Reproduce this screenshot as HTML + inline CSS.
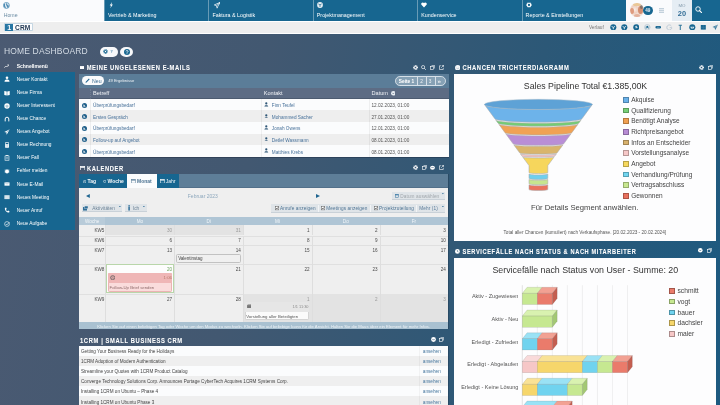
<!DOCTYPE html>
<html><head><meta charset="utf-8">
<style>
*{margin:0;padding:0;box-sizing:border-box}
html,body{width:720px;height:405px;overflow:hidden}
body{will-change:transform}
body{position:relative;font-family:"Liberation Sans",sans-serif;background:linear-gradient(100deg,#4b5a72 0%,#425871 35%,#2c5877 70%,#1d5a80 100%);color:#333}
.a{position:absolute}
.nw{white-space:nowrap}
/* top nav */
#nav{left:0;top:0;width:720px;height:21px;background:#fff}
.tab{top:0;height:20.5px;background:#176690;color:#fff;font-size:5.35px}
.tab .t{position:absolute;left:4px;top:12.4px;white-space:nowrap}
.tab .ic{position:absolute;left:5px;top:2.5px;width:6px;height:6px}
.sep{position:absolute;top:0;width:1px;height:20.5px;background:rgba(255,255,255,.35)}
#bar2{left:0;top:21px;width:720px;height:12.5px;background:#eeeeee;border-top:1px solid #fff;border-bottom:1px solid #fff}
/* sidebar */
#side{left:0;top:72px;width:75px;height:158px;background:#176690}
.si{position:absolute;left:16.8px;font-size:4.8px;color:#fff;white-space:nowrap}
.sic{position:absolute;left:4px;width:5px;height:5px}
/* panels */
.ptitle{font-size:5.5px;font-weight:bold;color:#fff;letter-spacing:.7px;white-space:nowrap;-webkit-text-stroke:.05px #fff;transform:translateY(.4px) scaleY(1.25);transform-origin:0 62%}
</style></head><body>

<!-- NAV -->
<div id="nav" class="a">
  <div class="a" style="left:0;top:0;width:104px;height:20.5px;background:#fafbfd">
    <svg class="a" style="left:3.2px;top:2px" width="6.8" height="6.9" viewBox="0 0 10 10"><circle cx="5" cy="5" r="4.4" fill="#e9f1f6" stroke="#4a89b3" stroke-width="1.1"/><path d="M2.2 2.6 C3.2 3 3.4 4.2 3 5 C2.6 5.8 3.6 6.4 4 7.2 L4.2 9 C3 8.6 1.6 7.6 1.1 5.6 C0.9 4.2 1.4 3.2 2.2 2.6 Z M5.6 1.4 C6.4 2.6 6 3.6 6.8 4.4 C7.6 5.2 8.4 4.8 8.8 5.6 C8.6 7.4 7.6 8.4 6.4 8.8 C6.8 7.6 6.2 6.8 5.6 6.4 C5 6 5.2 4.8 4.6 4 C4.2 3 4.8 2 5.6 1.4 Z" fill="#4a89b3"/></svg>
    <div class="a nw" style="left:3.7px;top:12.2px;font-size:5.2px;color:#6a8ba3">Home</div>
  </div>
  <div class="a tab" style="left:104px;width:104.4px"><div class="sep" style="left:0"></div><svg class="ic" style="left:4.6px;top:2px;width:4.5px;height:6.3px" viewBox="0 0 6 9"><path d="M4.2 0 L0.8 5 L2.8 5 L1.6 9 L5.3 3.6 L3.2 3.6 Z" fill="#fff"/></svg><span class="t">Vertrieb &amp; Marketing</span></div>
  <div class="a tab" style="left:208.4px;width:104.4px"><div class="sep" style="left:0"></div><svg class="ic" style="left:5.5px;top:2px;width:6.5px;height:6.5px" viewBox="0 0 10 10"><path d="M9.5 0.5 L0.5 4.5 L3.8 5.8 L4.8 9.5 L6 6.5 Z M3.8 5.8 L9.5 0.5" fill="none" stroke="#fff" stroke-width="1.1" stroke-linejoin="round"/></svg><span class="t">Faktura &amp; Logistik</span></div>
  <div class="a tab" style="left:312.8px;width:104.4px"><div class="sep" style="left:0"></div><svg class="ic" style="left:4.5px;top:2.2px;width:6px;height:6px" viewBox="0 0 10 10"><circle cx="5" cy="5" r="4.8" fill="#e8eef3"/><path d="M2.2 3.2 L5 4.8 L7.8 3.2 M5 4.8 L5 8.3" stroke="#176690" stroke-width="1.2" fill="none"/></svg><span class="t">Projektmanagement</span></div>
  <div class="a tab" style="left:417.2px;width:104.4px"><div class="sep" style="left:0"></div><svg class="ic" style="left:4.3px;top:2.4px;width:6px;height:5.6px" viewBox="0 0 10 9"><path d="M5 9 L0.8 4.6 C-0.3 3 0.6 0.5 2.8 0.5 C3.8 0.5 4.5 1 5 1.7 C5.5 1 6.2 0.5 7.2 0.5 C9.4 0.5 10.3 3 9.2 4.6 Z" fill="#fff"/></svg><span class="t">Kundenservice</span></div>
  <div class="a tab" style="left:521.6px;width:104.4px"><div class="sep" style="left:0"></div><svg class="ic" style="left:4.6px;top:2.3px;width:6px;height:6px" viewBox="0 0 10 10"><path d="M5 0.3 L6 1.6 L7.6 1 L7.9 2.6 L9.5 3.2 L8.8 4.8 L9.6 6.3 L8 6.9 L7.6 8.6 L6 8.2 L5 9.6 L4 8.2 L2.4 8.6 L2 6.9 L0.4 6.3 L1.2 4.8 L0.5 3.2 L2.1 2.6 L2.4 1 L4 1.6 Z" fill="#fff"/><circle cx="5" cy="5" r="1.9" fill="#176690"/></svg><span class="t">Reporte &amp; Einstellungen</span></div>
  <div class="a" style="left:626px;top:0;width:46px;height:20.5px;background:#fafbfd"></div>
  <!-- avatar -->
  <div class="a" style="left:629.8px;top:2.6px;width:14px;height:14.7px;border-radius:50%;overflow:hidden;background:#f1ddd2">
    <div class="a" style="left:1px;top:2px;width:7px;height:9px;border-radius:50%;background:radial-gradient(circle,#f7efe9 0%,#efcfc0 60%,rgba(239,207,192,0) 100%)"></div>
    <div class="a" style="left:0;top:5px;width:4px;height:6px;border-radius:50%;background:#d98c6c;opacity:.8"></div>
    <div class="a" style="left:8px;top:3px;width:5px;height:8px;border-radius:50%;background:#c9734f;opacity:.75"></div>
    <div class="a" style="left:3px;top:0;width:8px;height:3.5px;border-radius:50%;background:#e9c48d;opacity:.85"></div>
    <div class="a" style="left:10px;top:2px;width:3px;height:4px;border-radius:50%;background:#555c5e;opacity:.6"></div>
    <div class="a" style="left:4px;top:11px;width:6px;height:4px;border-radius:50%;background:#e0a68e;opacity:.8"></div>
  </div>
  <div class="a" style="left:642.8px;top:5.6px;width:10px;height:9.5px;border-radius:50%;background:#176690;color:#e8eef3;font-size:4.6px;font-weight:bold;text-align:center;line-height:9.5px">49</div>
  <div class="a" style="left:659px;top:8px;width:5.4px;height:4.8px;background:repeating-linear-gradient(#c3d1dc 0 1.1px,#e4eaf0 1.1px 1.85px)"></div>
  <div class="a" style="left:672.2px;top:0;width:19.5px;height:20.5px;background:#e5edf4">
    <div class="a nw" style="left:0;width:19.5px;text-align:center;top:3px;font-size:4.4px;color:#8299ab">MO</div>
    <div class="a nw" style="left:0;width:19.5px;text-align:center;top:9px;font-size:7.4px;font-weight:bold;color:#336e97">20</div>
  </div>
  <div class="a" style="left:691.7px;top:0;width:28.3px;height:20.5px;background:#176690">
    <svg class="a" style="left:3.3px;top:5.7px" width="7.5" height="7.5" viewBox="0 0 10 10"><circle cx="4" cy="4" r="3" fill="none" stroke="#fff" stroke-width="1.2"/><path d="M6.1 6.1 L9.2 9.2" stroke="#fff" stroke-width="1.6" stroke-linecap="round"/></svg>
  </div>
</div>

<!-- BAR 2 -->
<div id="bar2" class="a">
  <div class="a" style="left:4.4px;top:1px;width:28.2px;height:8.2px;background:#fdfdfe;border:0.6px solid #c5d6e2;border-radius:.8px">
    <div class="a" style="left:0;top:0;width:8px;height:7px;background:#2776a3"></div>
    <div class="a nw" style="left:1.9px;top:-0.4px;font-size:7.2px;font-weight:bold;color:#f4f8fb;line-height:8px">1</div>
    <div class="a nw" style="left:9.6px;top:-0.2px;font-size:6.6px;font-weight:bold;color:#233a55;line-height:8px;letter-spacing:.15px">CRM</div>
  </div>
  <div class="a nw" style="left:588.9px;top:3.2px;font-size:4.8px;color:#7a7a7a">Verlauf</div>
  <svg class="a" style="left:610.0px;top:1.6px" width="6.6" height="6.6" viewBox="0 0 10 10"><circle cx="5" cy="5" r="4.6" fill="#176690"/><path d="M2.3 3.5 L5 5.2 L7.7 3.5 M5 5.2 L5 8" stroke="#fff" stroke-width="1.2" fill="none"/></svg>
  <svg class="a" style="left:621.2px;top:1.6px" width="6.6" height="6.6" viewBox="0 0 10 10"><circle cx="5" cy="5" r="4.6" fill="#176690"/><path d="M2.3 3.5 L5 5.2 L7.7 3.5 M5 5.2 L5 8" stroke="#fff" stroke-width="1.2" fill="none"/></svg>
  <svg class="a" style="left:632.5px;top:1.6px" width="6.6" height="6.6" viewBox="0 0 10 10"><circle cx="5" cy="5" r="4.6" fill="#176690"/><path d="M3 4.2 L5.4 4.2 L5.4 2.8 M4.6 6.6 L4.6 5.2 L7 5.2" stroke="#fff" stroke-width="1.1" fill="none"/></svg>
  <svg class="a" style="left:644.0px;top:1.6px" width="6.6" height="6.6" viewBox="0 0 10 10"><circle cx="5" cy="5" r="4.2" fill="none" stroke="#9ab4c8" stroke-width="0.8"/><circle cx="5" cy="4" r="1.3" fill="#176690"/><path d="M2.5 6.8 L5 5.5 L7.5 6.8 M2 4.8 L8 4.8" stroke="#176690" stroke-width="0.9" fill="none"/></svg>
  <svg class="a" style="left:654.8px;top:1.6px" width="6.6" height="6.6" viewBox="0 0 10 10"><rect x="0.6" y="3" width="8.8" height="4" rx="2" fill="#176690"/><rect x="3" y="4.2" width="4" height="1.6" fill="#5a8fb0"/></svg>
  <svg class="a" style="left:666.1px;top:1.6px" width="6.6" height="6.6" viewBox="0 0 10 10"><path d="M8.2 3.2 A3.8 3.8 0 1 0 8.8 5.5 L5.5 5.5" fill="none" stroke="#a8bccb" stroke-width="1"/></svg>
  <svg class="a" style="left:677.3px;top:1.6px" width="6.6" height="6.6" viewBox="0 0 10 10"><path d="M2.5 1.2 L7.5 1.2 L7.5 2.5 L5.8 2.5 L5.8 9 L4.2 9 L4.2 2.5 L2.5 2.5 Z" fill="#176690" opacity=".85"/></svg>
  <svg class="a" style="left:689.0px;top:1.6px" width="6.6" height="6.6" viewBox="0 0 10 10"><circle cx="5" cy="5" r="4.6" fill="#176690"/><path d="M2 4 L8 4 L6.8 7 L3.2 7 Z" fill="#fff" opacity=".9"/><path d="M4 5 L6 5" stroke="#176690" stroke-width=".8"/></svg>
  <svg class="a" style="left:700.2px;top:1.6px" width="6.6" height="6.6" viewBox="0 0 10 10"><rect x="1.2" y="1.5" width="7.6" height="7" fill="#176690"/><path d="M1.2 5 L8.8 5 M5 1.5 L5 8.5" stroke="#4d86aa" stroke-width=".6"/></svg>
  <svg class="a" style="left:711.5px;top:1.6px" width="6.6" height="6.6" viewBox="0 0 10 10"><path d="M9.2 0.8 L0.8 4.6 L3.8 5.8 L5 9.2 Z" fill="#176690" opacity=".85"/><path d="M3.8 5.8 L9.2 0.8" stroke="#eee" stroke-width=".7"/></svg>
</div>

<!-- TITLE -->
<div class="a nw" style="left:4px;top:45.6px;font-size:8.5px;color:#d3dbe4;letter-spacing:.15px">HOME DASHBOARD</div>
<div class="a" style="left:99.6px;top:46.5px;width:18.1px;height:10.5px;border-radius:5.25px;background:#f7f8fa">
  <svg class="a" style="left:3.2px;top:2.8px" width="5" height="5" viewBox="0 0 10 10"><circle cx="5" cy="5" r="3.6" fill="none" stroke="#176690" stroke-width="2.4" stroke-dasharray="1.4 .9"/><circle cx="5" cy="5" r="3" fill="#176690"/><circle cx="5" cy="5" r="1.3" fill="#fff"/></svg>
  <svg class="a" style="left:10.5px;top:3.8px" width="3.4" height="3.4" viewBox="0 0 10 10"><path d="M1 1 L9 1 L6 5 L6 9 L4 9 L4 5 Z" fill="#8fb3cc"/></svg>
</div>
<div class="a" style="left:120.4px;top:46.5px;width:12.5px;height:10.5px;border-radius:50%;background:#f7f8fa">
  <svg class="a" style="left:3.2px;top:2.2px" width="6" height="6" viewBox="0 0 10 10"><circle cx="5" cy="5" r="5" fill="#176690"/><path d="M3.3 3.8 C3.3 2.2 6.8 2.2 6.8 3.8 C6.8 5 5 5 5 6.3" stroke="#fff" stroke-width="1.3" fill="none"/><circle cx="5" cy="8" r=".8" fill="#fff"/></svg>
</div>

<!-- SIDEBAR -->
<svg class="a" style="left:4.2px;top:63.5px" width="5.2" height="4.5" viewBox="0 0 10 9"><path d="M0.5 7.5 L3.5 4 L5.5 6 L9 2" stroke="#fff" stroke-width="1.3" fill="none"/><path d="M6.5 1.5 L9.5 1.5 L9.5 4.5" stroke="#fff" stroke-width="1.1" fill="none"/></svg>
<div class="a nw" style="left:16.7px;top:63.1px;font-size:5px;font-weight:bold;color:#fff">Schnellmenü</div>
<div id="side" class="a"></div>
<svg class="a" style="left:3.6px;top:76.40px" width="6" height="6" viewBox="0 0 10 10"><circle cx="5" cy="3" r="2.2" fill="#fff"/><path d="M0.8 9.5 C1 6.5 2.8 5.8 5 5.8 C7.2 5.8 9 6.5 9.2 9.5 Z" fill="#fff"/></svg><div class="a nw si" style="top:76.70px">Neuer Kontakt</div>
<svg class="a" style="left:3.6px;top:89.50px" width="6" height="6" viewBox="0 0 10 10"><path d="M0.5 1.5 L4.6 2.3 L4.6 9 L0.5 8.2 Z M9.5 1.5 L5.4 2.3 L5.4 9 L9.5 8.2 Z" fill="#fff"/></svg><div class="a nw si" style="top:89.80px">Neue Firma</div>
<svg class="a" style="left:3.6px;top:102.60px" width="6" height="6" viewBox="0 0 10 10"><circle cx="5" cy="5" r="4.5" fill="#fff"/><path d="M2.8 5.8 Q5 8 7.2 5.8" stroke="#176690" stroke-width="1" fill="none"/><circle cx="3.6" cy="3.8" r=".7" fill="#176690"/><circle cx="6.4" cy="3.8" r=".7" fill="#176690"/></svg><div class="a nw si" style="top:102.90px">Neuer Interessent</div>
<svg class="a" style="left:3.6px;top:115.70px" width="6" height="6" viewBox="0 0 10 10"><path d="M2 9 L2 5 A3 3 0 0 1 8 5 L8 9" stroke="#fff" stroke-width="1.6" fill="none"/></svg><div class="a nw si" style="top:116.00px">Neue Chance</div>
<svg class="a" style="left:3.6px;top:128.80px" width="6" height="6" viewBox="0 0 10 10"><path d="M9.5 0.5 L0.5 5 L3.8 6 L4.5 9.5 Z" fill="#fff"/><path d="M3.8 6 L9.5 0.5" stroke="#176690" stroke-width=".6"/></svg><div class="a nw si" style="top:129.10px">Neues Angebot</div>
<svg class="a" style="left:3.6px;top:141.90px" width="6" height="6" viewBox="0 0 10 10"><rect x="1.8" y="0.5" width="6.4" height="9" rx=".6" fill="#fff"/><rect x="2.8" y="1.5" width="4.4" height="2" fill="#176690"/><path d="M3 5 h1 M5.5 5 h1 M3 7 h1 M5.5 7 h1" stroke="#176690" stroke-width=".8"/></svg><div class="a nw si" style="top:142.20px">Neue Rechnung</div>
<svg class="a" style="left:3.6px;top:155.00px" width="6" height="6" viewBox="0 0 10 10"><rect x="1.8" y="1" width="6.4" height="8.5" rx=".5" fill="none" stroke="#fff" stroke-width="1.1"/><rect x="3.5" y="0.3" width="3" height="1.6" fill="#fff"/><path d="M3.3 4.5 h3.4 M3.3 6.5 h3.4" stroke="#fff" stroke-width=".8"/></svg><div class="a nw si" style="top:155.30px">Neuer Fall</div>
<svg class="a" style="left:3.6px;top:168.10px" width="6" height="6" viewBox="0 0 10 10"><ellipse cx="5" cy="5.8" rx="3.2" ry="3.4" fill="#fff"/><path d="M1 3.5 L9 3.5 M0.8 6.5 L9.2 6.5" stroke="#fff" stroke-width="1"/></svg><div class="a nw si" style="top:168.40px">Fehler melden</div>
<svg class="a" style="left:3.6px;top:181.20px" width="6" height="6" viewBox="0 0 10 10"><rect x="0.8" y="2.2" width="8.4" height="5.6" fill="#fff"/><path d="M0.8 2.2 L5 5.2 L9.2 2.2" stroke="#176690" stroke-width=".5" fill="none"/></svg><div class="a nw si" style="top:181.50px">Neue E-Mail</div>
<svg class="a" style="left:3.6px;top:194.30px" width="6" height="6" viewBox="0 0 10 10"><rect x="0.8" y="2" width="8.4" height="6.5" fill="#fff"/><path d="M3.3 2 v6.5 M6.7 2 v6.5" stroke="#176690" stroke-width=".6"/></svg><div class="a nw si" style="top:194.60px">Neues Meeting</div>
<svg class="a" style="left:3.6px;top:207.40px" width="6" height="6" viewBox="0 0 10 10"><path d="M1.5 1.5 L3.5 1 L4.5 3.5 L3.3 4.5 C4 6 4.5 6.5 5.8 7 L6.8 5.8 L9.2 7 L8.6 9 C4.5 9.2 1 5.5 1.5 1.5 Z" fill="#fff"/></svg><div class="a nw si" style="top:207.70px">Neuer Anruf</div>
<svg class="a" style="left:3.6px;top:220.50px" width="6" height="6" viewBox="0 0 10 10"><circle cx="5" cy="5" r="4" fill="none" stroke="#fff" stroke-width="1"/><path d="M3 5 L4.6 6.6 L9 2" stroke="#fff" stroke-width="1.1" fill="none"/></svg><div class="a nw si" style="top:220.80px">Neue Aufgabe</div>

<!-- EMAIL PANEL -->
<svg class="a" style="left:80px;top:65.8px" width="4.4" height="3.2" viewBox="0 0 10 7"><rect x="0" y="0" width="10" height="7" fill="#fff"/></svg>
<div class="a ptitle" style="left:86.7px;top:64.1px;font-size:5.8px;letter-spacing:.57px">MEINE UNGELESENEN E-MAILS</div>
<svg class="a" style="left:412.7px;top:64.6px" width="5" height="5" viewBox="0 0 10 10"><circle cx="5" cy="5" r="3.7" fill="none" stroke="#fff" stroke-width="2.4" stroke-dasharray="1.5 .95"/><circle cx="5" cy="5" r="3.1" fill="#fff"/><circle cx="5" cy="5" r="1.7" fill="#3a5a78"/></svg>
<svg class="a" style="left:421.0px;top:64.6px" width="5" height="5" viewBox="0 0 10 10"><circle cx="4.2" cy="4.2" r="3.2" fill="none" stroke="#fff" stroke-width="1.3"/><path d="M6.5 6.5 L9.5 9.5" stroke="#fff" stroke-width="1.6"/></svg>
<svg class="a" style="left:429.7px;top:64.6px" width="5" height="5" viewBox="0 0 10 10"><rect x="0.8" y="2.8" width="6.4" height="6.4" fill="none" stroke="#fff" stroke-width="1.2"/><path d="M3 0.8 L9.2 0.8 L9.2 7" fill="none" stroke="#fff" stroke-width="1.2"/></svg>
<svg class="a" style="left:438.8px;top:64.6px" width="5" height="5" viewBox="0 0 10 10"><path d="M4 1.5 L1 1.5 L1 9 L8.5 9 L8.5 6" fill="none" stroke="#fff" stroke-width="1.2"/><path d="M5.5 0.8 L9.2 0.8 L9.2 4.5 M9.2 0.8 L4.5 5.5" fill="none" stroke="#fff" stroke-width="1.2"/></svg>
<div class="a" style="left:79px;top:74px;width:369.5px;height:14px;background:#5b7d98"></div>
<div class="a" style="left:81.7px;top:76.2px;width:22.6px;height:9.1px;border-radius:4.55px;background:#fafbfc">
  <svg class="a" style="left:3px;top:1.8px" width="5.2" height="5.2" viewBox="0 0 10 10"><path d="M1 9 L1.5 7 L7.5 1 L9 2.5 L3 8.5 Z" fill="#1f6590"/></svg>
  <div class="a nw" style="left:10.4px;top:2.1px;font-size:5.2px;color:#3d6f93">Neu</div>
</div>
<div class="a nw" style="left:108.2px;top:77.6px;font-size:4.1px;color:#f0f4f7">49 Ergebnisse</div>
<div class="a" style="left:395px;top:76px;width:51px;height:9.8px;border-radius:4.9px;background:#86a1b5;border:.7px solid #d6e0e8"></div>
<div class="a" style="left:417.4px;top:76.4px;width:.6px;height:9px;background:#d6e0e8"></div>
<div class="a" style="left:425.7px;top:76.4px;width:.6px;height:9px;background:#d6e0e8"></div>
<div class="a" style="left:434.9px;top:76.4px;width:.6px;height:9px;background:#d6e0e8"></div>
<div class="a nw" style="left:398.8px;top:79.2px;font-size:4.8px;font-weight:bold;color:#fff">Seite 1</div>
<div class="a nw" style="left:420.2px;top:79.2px;font-size:4.8px;color:#eef3f6">2</div>
<div class="a nw" style="left:428.8px;top:79.2px;font-size:4.8px;color:#eef3f6">3</div>
<div class="a nw" style="left:437.6px;top:77.4px;font-size:6.2px;color:#fff">&raquo;</div>
<div class="a" style="left:79px;top:88px;width:369.5px;height:10.8px;background:#5d6c84;border-bottom:.8px solid #4d5b70"></div>
<div class="a" style="left:90.4px;top:88.8px;width:.6px;height:10px;border-left:.6px dotted rgba(255,255,255,.12)"></div>
<div class="a nw" style="left:93px;top:90px;font-size:5.6px;color:#eef1f5">Betreff</div>
<div class="a nw" style="left:263.7px;top:90px;font-size:5.6px;color:#eef1f5">Kontakt</div>
<div class="a nw" style="left:371.5px;top:90px;font-size:5.6px;color:#eef1f5">Datum</div>
<svg class="a" style="left:390.6px;top:91px" width="4.6" height="4.6" viewBox="0 0 10 10"><circle cx="5" cy="5" r="5" fill="#e8eef3"/><path d="M2.8 4 L5 6.3 L7.2 4" stroke="#5d6c84" stroke-width="1.4" fill="none"/></svg>
<div class="a" style="left:79px;top:98.80px;width:369.5px;height:11.62px;background:#fbfcfd">
  <div class="a" style="left:11.4px;top:0;width:.6px;height:11.62px;background:rgba(0,0,0,.05)"></div>
  <div class="a" style="left:182px;top:0;width:.6px;height:11.62px;background:rgba(0,0,0,.05)"></div>
  <div class="a" style="left:290.3px;top:0;width:.6px;height:11.62px;background:rgba(0,0,0,.05)"></div>
  <svg class="a" style="left:3.4px;top:3.8px" width="5" height="5" viewBox="0 0 10 10"><circle cx="5" cy="5" r="5" fill="#1f5f8a"/><path d="M3.5 3 L3.5 7.2 L6.8 7.2 M3.5 5 L6 5" stroke="#fff" stroke-width="1.2" fill="none"/></svg>
  <div class="a nw" style="left:14px;top:4.4px;font-size:4.7px;color:#467099">Überprüfungsbedarf</div>
  <svg class="a" style="left:185px;top:3.2px" width="4.6" height="4.6" viewBox="0 0 10 10"><circle cx="5" cy="3" r="2.4" fill="#2e5676"/><path d="M0.8 10 C0.8 6.2 9.2 6.2 9.2 10 Z" fill="#2e5676"/></svg>
  <div class="a nw" style="left:192.8px;top:4.4px;font-size:4.7px;color:#467099">Finn Teufel</div>
  <div class="a nw" style="left:292.5px;top:4.4px;font-size:4.7px;color:#555">12.02.2023, 01:00</div>
</div>
<div class="a" style="left:79px;top:110.42px;width:369.5px;height:11.62px;background:#eeeeee">
  <div class="a" style="left:11.4px;top:0;width:.6px;height:11.62px;background:rgba(0,0,0,.05)"></div>
  <div class="a" style="left:182px;top:0;width:.6px;height:11.62px;background:rgba(0,0,0,.05)"></div>
  <div class="a" style="left:290.3px;top:0;width:.6px;height:11.62px;background:rgba(0,0,0,.05)"></div>
  <svg class="a" style="left:3.4px;top:3.8px" width="5" height="5" viewBox="0 0 10 10"><circle cx="5" cy="5" r="5" fill="#1f5f8a"/><path d="M3.5 3 L3.5 7.2 L6.8 7.2 M3.5 5 L6 5" stroke="#fff" stroke-width="1.2" fill="none"/></svg>
  <div class="a nw" style="left:14px;top:4.4px;font-size:4.7px;color:#467099">Erstes Gespräch</div>
  <svg class="a" style="left:185px;top:3.2px" width="4.6" height="4.6" viewBox="0 0 10 10"><circle cx="5" cy="3" r="2.4" fill="#2e5676"/><path d="M0.8 10 C0.8 6.2 9.2 6.2 9.2 10 Z" fill="#2e5676"/></svg>
  <div class="a nw" style="left:192.8px;top:4.4px;font-size:4.7px;color:#467099">Mohammed Sacher</div>
  <div class="a nw" style="left:292.5px;top:4.4px;font-size:4.7px;color:#555">27.01.2023, 01:00</div>
</div>
<div class="a" style="left:79px;top:122.04px;width:369.5px;height:11.62px;background:#fbfcfd">
  <div class="a" style="left:11.4px;top:0;width:.6px;height:11.62px;background:rgba(0,0,0,.05)"></div>
  <div class="a" style="left:182px;top:0;width:.6px;height:11.62px;background:rgba(0,0,0,.05)"></div>
  <div class="a" style="left:290.3px;top:0;width:.6px;height:11.62px;background:rgba(0,0,0,.05)"></div>
  <svg class="a" style="left:3.4px;top:3.8px" width="5" height="5" viewBox="0 0 10 10"><circle cx="5" cy="5" r="5" fill="#1f5f8a"/><path d="M3.5 3 L3.5 7.2 L6.8 7.2 M3.5 5 L6 5" stroke="#fff" stroke-width="1.2" fill="none"/></svg>
  <div class="a nw" style="left:14px;top:4.4px;font-size:4.7px;color:#467099">Überprüfungsbedarf</div>
  <svg class="a" style="left:185px;top:3.2px" width="4.6" height="4.6" viewBox="0 0 10 10"><circle cx="5" cy="3" r="2.4" fill="#2e5676"/><path d="M0.8 10 C0.8 6.2 9.2 6.2 9.2 10 Z" fill="#2e5676"/></svg>
  <div class="a nw" style="left:192.8px;top:4.4px;font-size:4.7px;color:#467099">Jonah Owens</div>
  <div class="a nw" style="left:292.5px;top:4.4px;font-size:4.7px;color:#555">12.01.2023, 01:00</div>
</div>
<div class="a" style="left:79px;top:133.66px;width:369.5px;height:11.62px;background:#eeeeee">
  <div class="a" style="left:11.4px;top:0;width:.6px;height:11.62px;background:rgba(0,0,0,.05)"></div>
  <div class="a" style="left:182px;top:0;width:.6px;height:11.62px;background:rgba(0,0,0,.05)"></div>
  <div class="a" style="left:290.3px;top:0;width:.6px;height:11.62px;background:rgba(0,0,0,.05)"></div>
  <svg class="a" style="left:3.4px;top:3.8px" width="5" height="5" viewBox="0 0 10 10"><circle cx="5" cy="5" r="5" fill="#1f5f8a"/><path d="M3.5 3 L3.5 7.2 L6.8 7.2 M3.5 5 L6 5" stroke="#fff" stroke-width="1.2" fill="none"/></svg>
  <div class="a nw" style="left:14px;top:4.4px;font-size:4.7px;color:#467099">Follow-up auf Angebot</div>
  <svg class="a" style="left:185px;top:3.2px" width="4.6" height="4.6" viewBox="0 0 10 10"><circle cx="5" cy="3" r="2.4" fill="#2e5676"/><path d="M0.8 10 C0.8 6.2 9.2 6.2 9.2 10 Z" fill="#2e5676"/></svg>
  <div class="a nw" style="left:192.8px;top:4.4px;font-size:4.7px;color:#467099">Detlef Wassmann</div>
  <div class="a nw" style="left:292.5px;top:4.4px;font-size:4.7px;color:#555">08.01.2023, 01:00</div>
</div>
<div class="a" style="left:79px;top:145.28px;width:369.5px;height:11.62px;background:#fbfcfd">
  <div class="a" style="left:11.4px;top:0;width:.6px;height:11.62px;background:rgba(0,0,0,.05)"></div>
  <div class="a" style="left:182px;top:0;width:.6px;height:11.62px;background:rgba(0,0,0,.05)"></div>
  <div class="a" style="left:290.3px;top:0;width:.6px;height:11.62px;background:rgba(0,0,0,.05)"></div>
  <svg class="a" style="left:3.4px;top:3.8px" width="5" height="5" viewBox="0 0 10 10"><circle cx="5" cy="5" r="5" fill="#1f5f8a"/><path d="M3.5 3 L3.5 7.2 L6.8 7.2 M3.5 5 L6 5" stroke="#fff" stroke-width="1.2" fill="none"/></svg>
  <div class="a nw" style="left:14px;top:4.4px;font-size:4.7px;color:#467099">Überprüfungsbedarf</div>
  <svg class="a" style="left:185px;top:3.2px" width="4.6" height="4.6" viewBox="0 0 10 10"><circle cx="5" cy="3" r="2.4" fill="#2e5676"/><path d="M0.8 10 C0.8 6.2 9.2 6.2 9.2 10 Z" fill="#2e5676"/></svg>
  <div class="a nw" style="left:192.8px;top:4.4px;font-size:4.7px;color:#467099">Matthies Krebs</div>
  <div class="a nw" style="left:292.5px;top:4.4px;font-size:4.7px;color:#555">08.01.2023, 01:00</div>
</div>
<div class="a" style="left:79px;top:156.9px;width:369.5px;height:.8px;background:rgba(20,30,50,.35)"></div>

<!-- CALENDAR PANEL -->
<svg class="a" style="left:79.6px;top:165.6px" width="5.2" height="4.8" viewBox="0 0 10 9"><rect x=".7" y=".7" width="8.6" height="7.6" fill="none" stroke="#fff" stroke-width="1.3"/><rect x=".7" y=".7" width="8.6" height="2.6" fill="#fff"/></svg>
<div class="a ptitle" style="left:86.9px;top:165.1px;font-size:5.8px;letter-spacing:.57px">KALENDER</div>
<svg class="a" style="left:412.7px;top:165.2px" width="5" height="5" viewBox="0 0 10 10"><circle cx="5" cy="5" r="3.7" fill="none" stroke="#fff" stroke-width="2.4" stroke-dasharray="1.5 .95"/><circle cx="5" cy="5" r="3.1" fill="#fff"/><circle cx="5" cy="5" r="1.7" fill="#3a5a78"/></svg>
<svg class="a" style="left:421.5px;top:165.2px" width="5" height="5" viewBox="0 0 10 10"><rect x="0.8" y="2.8" width="6.4" height="6.4" fill="none" stroke="#fff" stroke-width="1.2"/><path d="M3 0.8 L9.2 0.8 L9.2 7" fill="none" stroke="#fff" stroke-width="1.2"/></svg>
<svg class="a" style="left:430.3px;top:165.2px" width="5" height="5" viewBox="0 0 10 10"><ellipse cx="5" cy="5.5" rx="4.8" ry="4" fill="#fff"/><path d="M2.5 5 h5" stroke="#3a5a78" stroke-width="1"/></svg>
<svg class="a" style="left:439.2px;top:165.2px" width="5" height="5" viewBox="0 0 10 10"><path d="M4 1.5 L1 1.5 L1 9 L8.5 9 L8.5 6" fill="none" stroke="#fff" stroke-width="1.2"/><path d="M5.5 0.8 L9.2 0.8 L9.2 4.5 M9.2 0.8 L4.5 5.5" fill="none" stroke="#fff" stroke-width="1.2"/></svg>
<div class="a" style="left:79px;top:174.2px;width:369px;height:13.6px;background:#5e7e98;border-bottom:1px solid #52708a"></div>
<div class="a" style="left:79px;top:174.2px;width:48px;height:13.6px;background:#176690"></div>
<div class="a" style="left:156.6px;top:174.2px;width:22.4px;height:13.6px;background:#176690"></div>
<div class="a" style="left:127px;top:174.2px;width:29.6px;height:13.8px;background:#fbfcfd"></div>
<svg class="a" style="left:82.9px;top:179.6px" width="3.4" height="3.4" viewBox="0 0 10 10"><circle cx="5" cy="5" r="4" fill="none" stroke="#fff" stroke-width="1.5"/><path d="M5 2.5 L5 5 L7 6" stroke="#fff" stroke-width="1.2" fill="none"/></svg>
<div class="a nw" style="left:87.6px;top:178.1px;font-size:5px;font-weight:bold;color:#f4f7fa">Tag</div>
<svg class="a" style="left:103px;top:180px" width="3.4" height="2.8" viewBox="0 0 10 8"><ellipse cx="5" cy="4" rx="4" ry="3" fill="none" stroke="#fff" stroke-width="1.5"/></svg>
<div class="a nw" style="left:107.6px;top:178.1px;font-size:5px;font-weight:bold;color:#f4f7fa">Woche</div>
<svg class="a" style="left:130.8px;top:178.6px" width="4.8" height="4.6" viewBox="0 0 10 9"><rect x=".7" y=".7" width="8.6" height="7.6" fill="none" stroke="#5a7d99" stroke-width="1.1"/><rect x=".7" y=".7" width="8.6" height="2.2" fill="#5a7d99"/></svg>
<div class="a nw" style="left:137px;top:178.1px;font-size:5px;font-weight:bold;color:#4f7594">Monat</div>
<svg class="a" style="left:160px;top:178.6px" width="4.8" height="4.6" viewBox="0 0 10 9"><rect x=".7" y=".7" width="8.6" height="7.6" fill="none" stroke="#fff" stroke-width="1.1"/><rect x=".7" y=".7" width="8.6" height="2.2" fill="#fff"/></svg>
<div class="a nw" style="left:165.8px;top:178.1px;font-size:5px;color:#f4f7fa">Jahr</div>
<div class="a" style="left:79px;top:187.8px;width:369px;height:134.4px;background:#efefef"></div>
<svg class="a" style="left:86.2px;top:194.2px" width="3.8" height="4" viewBox="0 0 4 4"><path d="M4 0 L0 2 L4 4 Z" fill="#1f6590"/></svg>
<div class="a nw" style="left:187.8px;top:193.3px;font-size:5px;color:#8ea8bd">Februar 2023</div>
<svg class="a" style="left:316px;top:193.8px" width="4" height="4" viewBox="0 0 4 4"><path d="M0 0 L4 2 L0 4 Z" fill="#1f6590"/></svg>
<div class="a" style="left:391.8px;top:191.6px;width:53.5px;height:8.9px;background:#dfe4e8;border-bottom:.6px solid #c9d1d8"></div>
<svg class="a" style="left:395.2px;top:194.1px" width="3.8" height="3.8" viewBox="0 0 10 10"><rect x=".8" y=".8" width="8.4" height="8.4" fill="none" stroke="#3c7aa6" stroke-width="1.4"/><rect x=".8" y=".8" width="8.4" height="2.6" fill="#3c7aa6"/></svg>
<div class="a nw" style="left:400.3px;top:193.6px;font-size:4.7px;color:#a0a6ab;letter-spacing:.1px">Datum auswählen</div>
<svg class="a" style="left:442.2px;top:193.3px" width="1.8" height="1.4" viewBox="0 0 4 3"><path d="M0 0 L4 0 L2 3 Z" fill="#2c6b96"/></svg>
<div class="a" style="left:81.8px;top:204.2px;width:40.4px;height:8.2px;background:#dfe4e8;border-bottom:.6px solid #c9d1d8"></div>
<svg class="a" style="left:82.8px;top:206px" width="5" height="4.6" viewBox="0 0 10 9"><rect x="0" y="2" width="8" height="7" fill="#2f6e98"/><rect x="3" y="0" width="7" height="5" fill="#2f6e98" stroke="#dfe4e8" stroke-width=".8"/></svg>
<div class="a nw" style="left:92.2px;top:206px;font-size:4.7px;color:#6a8094;letter-spacing:.1px">Aktivitäten</div>
<svg class="a" style="left:119px;top:205.6px" width="1.8" height="1.4" viewBox="0 0 4 3"><path d="M0 0 L4 0 L2 3 Z" fill="#2c6b96"/></svg>
<div class="a" style="left:125.1px;top:204.2px;width:21.6px;height:8.2px;background:#dfe4e8;border-bottom:.6px solid #c9d1d8"></div>
<svg class="a" style="left:127.6px;top:205.4px" width="2.2" height="5.6" viewBox="0 0 4 10"><circle cx="2" cy="1.5" r="1.5" fill="#2f6e98"/><rect x=".6" y="3.3" width="2.8" height="6.7" fill="#2f6e98"/></svg>
<div class="a nw" style="left:132.9px;top:206px;font-size:4.7px;color:#6a8094">Ich</div>
<svg class="a" style="left:143.4px;top:205.6px" width="1.8" height="1.4" viewBox="0 0 4 3"><path d="M0 0 L4 0 L2 3 Z" fill="#2c6b96"/></svg>
<div class="a" style="left:271.4px;top:204.2px;width:173.9px;height:8.6px;background:#dfe4e8;border-bottom:.6px solid #c9d1d8"></div>

<svg class="a" style="left:274.9px;top:206.4px" width="4.2" height="4.2" viewBox="0 0 10 10"><rect x=".8" y=".8" width="8.4" height="8.4" fill="#fff" stroke="#555" stroke-width="1.2"/><path d="M2.5 5 L4.5 7 L8 3" stroke="#222" stroke-width="1.5" fill="none"/></svg>
<div class="a nw" style="left:280.0px;top:206px;font-size:4.7px;color:#4d7393;letter-spacing:.1px">Anrufe anzeigen</div>
<div class="a" style="left:317.7px;top:204.6px;width:.6px;height:7.8px;background:#f2f4f6"></div>
<svg class="a" style="left:321.2px;top:206.4px" width="4.2" height="4.2" viewBox="0 0 10 10"><rect x=".8" y=".8" width="8.4" height="8.4" fill="#fff" stroke="#555" stroke-width="1.2"/><path d="M2.5 5 L4.5 7 L8 3" stroke="#222" stroke-width="1.5" fill="none"/></svg>
<div class="a nw" style="left:326.3px;top:206px;font-size:4.7px;color:#4d7393;letter-spacing:.1px">Meetings anzeigen</div>
<div class="a" style="left:370.4px;top:204.6px;width:.6px;height:7.8px;background:#f2f4f6"></div>
<svg class="a" style="left:373.9px;top:206.4px" width="4.2" height="4.2" viewBox="0 0 10 10"><rect x=".8" y=".8" width="8.4" height="8.4" fill="#fff" stroke="#555" stroke-width="1.2"/><path d="M2.5 5 L4.5 7 L8 3" stroke="#222" stroke-width="1.5" fill="none"/></svg>
<div class="a nw" style="left:379.0px;top:206px;font-size:4.7px;color:#4d7393;letter-spacing:.1px">Projektzuteilung</div>
<div class="a" style="left:416.1px;top:204.6px;width:.6px;height:7.8px;background:#f2f4f6"></div>
<div class="a nw" style="left:419.3px;top:206px;font-size:4.7px;color:#5a7a98;letter-spacing:.1px">Mehr (1)</div>
<svg class="a" style="left:441.8px;top:205.6px" width="1.8" height="1.4" viewBox="0 0 4 3"><path d="M0 0 L4 0 L2 3 Z" fill="#2c6b96"/></svg>
<div class="a" style="left:79px;top:217px;width:369px;height:8.2px;background:#afc5d5"></div>
<div class="a" style="left:79px;top:217px;width:26.4px;height:8.2px;background:#b8cbd9"></div>
<div class="a nw" style="left:79px;width:26.4px;text-align:center;top:219.1px;font-size:4.6px;color:#f2f6f9">Woche</div>
<div class="a nw" style="left:105.4px;width:68.9px;text-align:center;top:219.1px;font-size:4.6px;color:#f2f6f9">Mo</div>
<div class="a nw" style="left:174.3px;width:68.7px;text-align:center;top:219.1px;font-size:4.6px;color:#f2f6f9">Di</div>
<div class="a nw" style="left:243px;width:68.8px;text-align:center;top:219.1px;font-size:4.6px;color:#f2f6f9">Mi</div>
<div class="a nw" style="left:311.8px;width:68.0px;text-align:center;top:219.1px;font-size:4.6px;color:#f2f6f9">Do</div>
<div class="a nw" style="left:379.8px;width:68.2px;text-align:center;top:219.1px;font-size:4.6px;color:#f2f6f9">Fr</div>
<div class="a nw" style="left:79px;width:25.4px;text-align:right;top:228.1px;font-size:4.6px;color:#4a4a4a">KW5</div>
<div class="a" style="left:105.4px;top:225.2px;width:68.9px;height:10.3px;background:#e3e3e3"></div>
<div class="a" style="left:105.4px;top:225.2px;width:.6px;height:10.3px;background:#dedede"></div>
<div class="a nw" style="left:105.4px;width:66.7px;text-align:right;top:228.1px;font-size:4.6px;color:#9a9a9a">30</div>
<div class="a" style="left:174.3px;top:225.2px;width:68.7px;height:10.3px;background:#e3e3e3"></div>
<div class="a" style="left:174.3px;top:225.2px;width:.6px;height:10.3px;background:#dedede"></div>
<div class="a nw" style="left:174.3px;width:66.5px;text-align:right;top:228.1px;font-size:4.6px;color:#9a9a9a">31</div>
<div class="a" style="left:243.0px;top:225.2px;width:.6px;height:10.3px;background:#dedede"></div>
<div class="a nw" style="left:243.0px;width:66.6px;text-align:right;top:228.1px;font-size:4.6px;color:#4a4a4a">1</div>
<div class="a" style="left:311.8px;top:225.2px;width:.6px;height:10.3px;background:#dedede"></div>
<div class="a nw" style="left:311.8px;width:65.8px;text-align:right;top:228.1px;font-size:4.6px;color:#4a4a4a">2</div>
<div class="a" style="left:379.8px;top:225.2px;width:.6px;height:10.3px;background:#dedede"></div>
<div class="a nw" style="left:379.8px;width:66.0px;text-align:right;top:228.1px;font-size:4.6px;color:#4a4a4a">3</div>
<div class="a nw" style="left:79px;width:25.4px;text-align:right;top:238.4px;font-size:4.6px;color:#4a4a4a">KW6</div>
<div class="a" style="left:79px;top:235.5px;width:369px;height:.6px;background:#e0e0e0"></div>
<div class="a" style="left:105.4px;top:235.5px;width:.6px;height:9.7px;background:#dedede"></div>
<div class="a nw" style="left:105.4px;width:66.7px;text-align:right;top:238.4px;font-size:4.6px;color:#4a4a4a">6</div>
<div class="a" style="left:174.3px;top:235.5px;width:.6px;height:9.7px;background:#dedede"></div>
<div class="a nw" style="left:174.3px;width:66.5px;text-align:right;top:238.4px;font-size:4.6px;color:#4a4a4a">7</div>
<div class="a" style="left:243.0px;top:235.5px;width:.6px;height:9.7px;background:#dedede"></div>
<div class="a nw" style="left:243.0px;width:66.6px;text-align:right;top:238.4px;font-size:4.6px;color:#4a4a4a">8</div>
<div class="a" style="left:311.8px;top:235.5px;width:.6px;height:9.7px;background:#dedede"></div>
<div class="a nw" style="left:311.8px;width:65.8px;text-align:right;top:238.4px;font-size:4.6px;color:#4a4a4a">9</div>
<div class="a" style="left:379.8px;top:235.5px;width:.6px;height:9.7px;background:#dedede"></div>
<div class="a nw" style="left:379.8px;width:66.0px;text-align:right;top:238.4px;font-size:4.6px;color:#4a4a4a">10</div>
<div class="a nw" style="left:79px;width:25.4px;text-align:right;top:248.1px;font-size:4.6px;color:#4a4a4a">KW7</div>
<div class="a" style="left:79px;top:245.2px;width:369px;height:.6px;background:#e0e0e0"></div>
<div class="a" style="left:105.4px;top:245.2px;width:.6px;height:18.9px;background:#dedede"></div>
<div class="a nw" style="left:105.4px;width:66.7px;text-align:right;top:248.1px;font-size:4.6px;color:#4a4a4a">13</div>
<div class="a" style="left:174.3px;top:245.2px;width:.6px;height:18.9px;background:#dedede"></div>
<div class="a nw" style="left:174.3px;width:66.5px;text-align:right;top:248.1px;font-size:4.6px;color:#4a4a4a">14</div>
<div class="a" style="left:243.0px;top:245.2px;width:.6px;height:18.9px;background:#dedede"></div>
<div class="a nw" style="left:243.0px;width:66.6px;text-align:right;top:248.1px;font-size:4.6px;color:#4a4a4a">15</div>
<div class="a" style="left:311.8px;top:245.2px;width:.6px;height:18.9px;background:#dedede"></div>
<div class="a nw" style="left:311.8px;width:65.8px;text-align:right;top:248.1px;font-size:4.6px;color:#4a4a4a">16</div>
<div class="a" style="left:379.8px;top:245.2px;width:.6px;height:18.9px;background:#dedede"></div>
<div class="a nw" style="left:379.8px;width:66.0px;text-align:right;top:248.1px;font-size:4.6px;color:#4a4a4a">17</div>
<div class="a nw" style="left:79px;width:25.4px;text-align:right;top:267.0px;font-size:4.6px;color:#4a4a4a">KW8</div>
<div class="a" style="left:79px;top:264.1px;width:369px;height:.6px;background:#e0e0e0"></div>
<div class="a" style="left:105.4px;top:264.1px;width:.6px;height:29.5px;background:#dedede"></div>
<div class="a" style="left:174.3px;top:264.1px;width:.6px;height:29.5px;background:#dedede"></div>
<div class="a nw" style="left:174.3px;width:66.5px;text-align:right;top:267.0px;font-size:4.6px;color:#4a4a4a">21</div>
<div class="a" style="left:243.0px;top:264.1px;width:.6px;height:29.5px;background:#dedede"></div>
<div class="a nw" style="left:243.0px;width:66.6px;text-align:right;top:267.0px;font-size:4.6px;color:#4a4a4a">22</div>
<div class="a" style="left:311.8px;top:264.1px;width:.6px;height:29.5px;background:#dedede"></div>
<div class="a nw" style="left:311.8px;width:65.8px;text-align:right;top:267.0px;font-size:4.6px;color:#4a4a4a">23</div>
<div class="a" style="left:379.8px;top:264.1px;width:.6px;height:29.5px;background:#dedede"></div>
<div class="a nw" style="left:379.8px;width:66.0px;text-align:right;top:267.0px;font-size:4.6px;color:#4a4a4a">24</div>
<div class="a nw" style="left:79px;width:25.4px;text-align:right;top:296.5px;font-size:4.6px;color:#4a4a4a">KW9</div>
<div class="a" style="left:79px;top:293.6px;width:369px;height:.6px;background:#e0e0e0"></div>
<div class="a" style="left:105.4px;top:293.6px;width:.6px;height:28.6px;background:#dedede"></div>
<div class="a nw" style="left:105.4px;width:66.7px;text-align:right;top:296.5px;font-size:4.6px;color:#4a4a4a">27</div>
<div class="a" style="left:174.3px;top:293.6px;width:.6px;height:28.6px;background:#dedede"></div>
<div class="a nw" style="left:174.3px;width:66.5px;text-align:right;top:296.5px;font-size:4.6px;color:#4a4a4a">28</div>
<div class="a" style="left:243.0px;top:293.6px;width:68.8px;height:28.6px;background:#e3e3e3"></div>
<div class="a" style="left:243.0px;top:293.6px;width:.6px;height:28.6px;background:#dedede"></div>
<div class="a nw" style="left:243.0px;width:66.6px;text-align:right;top:296.5px;font-size:4.6px;color:#9a9a9a">1</div>
<div class="a" style="left:311.8px;top:293.6px;width:68.0px;height:28.6px;background:#e3e3e3"></div>
<div class="a" style="left:311.8px;top:293.6px;width:.6px;height:28.6px;background:#dedede"></div>
<div class="a nw" style="left:311.8px;width:65.8px;text-align:right;top:296.5px;font-size:4.6px;color:#9a9a9a">2</div>
<div class="a" style="left:379.8px;top:293.6px;width:68.2px;height:28.6px;background:#e3e3e3"></div>
<div class="a" style="left:379.8px;top:293.6px;width:.6px;height:28.6px;background:#dedede"></div>
<div class="a nw" style="left:379.8px;width:66.0px;text-align:right;top:296.5px;font-size:4.6px;color:#9a9a9a">3</div>
<div class="a" style="left:105.6px;top:264.3px;width:68.6px;height:29.2px;background:#fdfdfd;border:.6px solid #b9d6aa"></div>
<div class="a nw" style="left:105.4px;width:66.7px;text-align:right;top:267.0px;font-size:4.6px;color:#6aa45a">20</div>
<div class="a" style="left:108px;top:272.9px;width:64px;height:18.8px;border-radius:1.2px;background:#fadcdc;border:.5px solid #eab3b3"></div>
<div class="a" style="left:108.3px;top:273.2px;width:63.4px;height:9.6px;border-radius:1px 1px 0 0;background:#efb6b6"></div>
<svg class="a" style="left:109.5px;top:275px" width="5.4" height="5.4" viewBox="0 0 10 10"><circle cx="5" cy="5" r="4" fill="none" stroke="#555" stroke-width="1.1"/><path d="M2.5 7.5 L7.5 2.5 M1.5 5 L5 1.5 M5 8.5 L8.5 5" stroke="#555" stroke-width="1"/></svg>
<div class="a nw" style="left:163.6px;top:275px;font-size:4.3px;color:#b77a6a">1:06</div>
<div class="a nw" style="left:109.6px;top:285px;font-size:4.3px;color:#8e6a6a">Follow-Up Brief senden</div>
<div class="a" style="left:176.4px;top:253.6px;width:64.2px;height:9.4px;border-radius:1.6px;background:#f0f0f0;border:.6px solid #c2c2c2"></div>
<div class="a nw" style="left:178.2px;top:255.8px;font-size:4.5px;color:#444">Valentinstag</div>
<div class="a" style="left:245px;top:301.7px;width:63.9px;height:18.3px;border-radius:1.2px;background:#fbfbfb;border:.5px solid #d4d4d4"></div>
<div class="a" style="left:245.3px;top:302px;width:63.3px;height:9.7px;background:#e6e6e6;border-radius:1px 1px 0 0"></div>
<svg class="a" style="left:246.8px;top:304.3px" width="4.6" height="4" viewBox="0 0 10 9"><rect x="0" y="2.5" width="10" height="6.5" fill="#777"/><circle cx="2.5" cy="1.6" r="1.2" fill="#777"/><circle cx="5" cy="1.6" r="1.2" fill="#777"/><circle cx="7.5" cy="1.6" r="1.2" fill="#777"/></svg>
<div class="a nw" style="left:292.6px;top:304.1px;font-size:3.9px;color:#8a8a8a">1/1 11:30</div>
<div class="a nw" style="left:246.2px;top:313.9px;font-size:4.3px;color:#555">Vorstellung aller Beteiligten</div>
<div class="a" style="left:79px;top:322.2px;width:369px;height:7.2px;background:#a9c1d1"></div>
<div class="a nw" style="left:79px;width:369px;text-align:center;top:323.6px;font-size:4.22px;color:#eef3f7">Klicken Sie auf einen beliebigen Tag oder Woche um den Modus zu wechseln. Klicken Sie auf beliebige Icons für die Ansicht. Halten Sie die Maus über ein Element für mehr Infos.</div>
<div class="a" style="left:448px;top:174.4px;width:1px;height:155px;background:rgba(20,30,50,.25)"></div>

<!-- 1CRM PANEL -->
<div class="a ptitle" style="left:80px;top:336.6px;font-size:5.8px;letter-spacing:.62px">1CRM | SMALL BUSINESS CRM</div>
<svg class="a" style="left:430.5px;top:337.4px" width="5" height="5" viewBox="0 0 10 10"><circle cx="5" cy="5" r="4.8" fill="#fff"/><path d="M2.8 4 L5 6.3 L7.2 4" stroke="#3a5a78" stroke-width="1.3" fill="none"/></svg>
<svg class="a" style="left:439px;top:337.4px" width="5" height="5" viewBox="0 0 10 10"><rect x="0.8" y="2.8" width="6.4" height="6.4" fill="none" stroke="#fff" stroke-width="1.2"/><path d="M3 0.8 L9.2 0.8 L9.2 7" fill="none" stroke="#fff" stroke-width="1.2"/></svg>
<div class="a" style="left:79px;top:345.60px;width:369px;height:10.15px;background:#fbfcfd"><div class="a nw" style="left:2px;top:3.3px;font-size:4.62px;color:#444">Getting Your Business Ready for the Holidays</div><div class="a" style="left:340.4px;top:0;width:29px;height:10.15px;background:#fbfcfd;border-left:.6px solid rgba(0,0,0,.04)"></div><div class="a nw" style="left:343.8px;top:3.3px;font-size:4.7px;color:#4a7aa0">ansehen</div></div>
<div class="a" style="left:79px;top:355.75px;width:369px;height:10.15px;background:#efefef"><div class="a nw" style="left:2px;top:3.3px;font-size:4.62px;color:#444">1CRM Adoption of Modern Authentication</div><div class="a" style="left:340.4px;top:0;width:29px;height:10.15px;background:#efefef;border-left:.6px solid rgba(0,0,0,.04)"></div><div class="a nw" style="left:343.8px;top:3.3px;font-size:4.7px;color:#4a7aa0">ansehen</div></div>
<div class="a" style="left:79px;top:365.90px;width:369px;height:10.15px;background:#fbfcfd"><div class="a nw" style="left:2px;top:3.3px;font-size:4.62px;color:#444">Streamline your Quotes with 1CRM Product Catalog</div><div class="a" style="left:340.4px;top:0;width:29px;height:10.15px;background:#fbfcfd;border-left:.6px solid rgba(0,0,0,.04)"></div><div class="a nw" style="left:343.8px;top:3.3px;font-size:4.7px;color:#4a7aa0">ansehen</div></div>
<div class="a" style="left:79px;top:376.05px;width:369px;height:10.15px;background:#efefef"><div class="a nw" style="left:2px;top:3.3px;font-size:4.62px;color:#444">Converge Technology Solutions Corp. Announces Portage CyberTech Acquires 1CRM Systems Corp.</div><div class="a" style="left:340.4px;top:0;width:29px;height:10.15px;background:#efefef;border-left:.6px solid rgba(0,0,0,.04)"></div><div class="a nw" style="left:343.8px;top:3.3px;font-size:4.7px;color:#4a7aa0">ansehen</div></div>
<div class="a" style="left:79px;top:386.20px;width:369px;height:10.15px;background:#fbfcfd"><div class="a nw" style="left:2px;top:3.3px;font-size:4.62px;color:#444">Installing 1CRM on Ubuntu – Phase 4</div><div class="a" style="left:340.4px;top:0;width:29px;height:10.15px;background:#fbfcfd;border-left:.6px solid rgba(0,0,0,.04)"></div><div class="a nw" style="left:343.8px;top:3.3px;font-size:4.7px;color:#4a7aa0">ansehen</div></div>
<div class="a" style="left:79px;top:396.35px;width:369px;height:10.15px;background:#efefef"><div class="a nw" style="left:2px;top:3.3px;font-size:4.62px;color:#444">Installing 1CRM on Ubuntu Phase 3</div><div class="a" style="left:340.4px;top:0;width:29px;height:10.15px;background:#efefef;border-left:.6px solid rgba(0,0,0,.04)"></div><div class="a nw" style="left:343.8px;top:3.3px;font-size:4.7px;color:#4a7aa0">ansehen</div></div>
<div class="a" style="left:448px;top:345.6px;width:1px;height:60px;background:rgba(20,30,50,.25)"></div>

<!-- CHART PANEL -->
<svg class="a" style="left:454.8px;top:64.8px" width="5.4" height="5.4" viewBox="0 0 10 10"><circle cx="5" cy="5" r="5" fill="#f4f6f8"/><path d="M2.6 5.6 Q5 8.2 7.4 5.6" stroke="#8da0b0" stroke-width="1" fill="none"/></svg>
<div class="a ptitle" style="left:462.5px;top:64.1px;font-size:5.8px;letter-spacing:.6px">CHANCEN TRICHTERDIAGRAMM</div>
<svg class="a" style="left:699px;top:64.6px" width="5" height="5" viewBox="0 0 10 10"><circle cx="5" cy="5" r="3.7" fill="none" stroke="#fff" stroke-width="2.4" stroke-dasharray="1.5 .95"/><circle cx="5" cy="5" r="3.1" fill="#fff"/><circle cx="5" cy="5" r="1.7" fill="#2a5777"/></svg>
<svg class="a" style="left:707.5px;top:64.6px" width="5" height="5" viewBox="0 0 10 10"><rect x="0.8" y="2.8" width="6.4" height="6.4" fill="none" stroke="#fff" stroke-width="1.2"/><path d="M3 0.8 L9.2 0.8 L9.2 7" fill="none" stroke="#fff" stroke-width="1.2"/></svg>
<div class="a" style="left:453.6px;top:73.7px;width:262.4px;height:167.3px;background:#fdfdfe"></div>
<div class="a nw" style="left:523.8px;top:80.7px;font-size:8.75px;color:#333">Sales Pipeline Total €1.385,00K</div>
<svg class="a" style="left:0;top:0" width="720" height="405" viewBox="0 0 720 405"><path d="M484.40 104.40 A54.00 5.02 0 0 0 592.40 104.40 L581.99 118.71 A43.59 3.49 0 0 1 494.81 118.71 Z" fill="#6db3ea" stroke="#ababab" stroke-width=".55"/><ellipse cx="538.4" cy="104.4" rx="54.0" ry="5.1" fill="#5ea2d6" stroke="#a9bccb" stroke-width=".5"/><path d="M495.70 119.93 A42.70 3.37 0 0 0 581.10 119.93 L578.78 123.13 A40.38 3.07 0 0 1 498.02 123.13 Z" fill="#74cc74" stroke="#ababab" stroke-width=".55"/><path d="M498.83 124.23 A39.57 2.97 0 0 0 577.97 124.23 L571.85 132.64 A33.45 2.26 0 0 1 504.95 132.64 Z" fill="#f0a254" stroke="#ababab" stroke-width=".55"/><path d="M505.74 133.72 A32.66 2.18 0 0 0 571.06 133.72 L563.70 143.85 A25.30 1.45 0 0 1 513.10 143.85 Z" fill="#b98ed6" stroke="#ababab" stroke-width=".55"/><path d="M513.88 144.91 A24.52 1.39 0 0 0 562.92 144.91 L556.98 153.09 A18.58 0.91 0 0 1 519.82 153.09 Z" fill="#d9b56c" stroke="#ababab" stroke-width=".55"/><path d="M520.51 154.04 A17.89 0.86 0 0 0 556.29 154.04 L554.60 156.35 A16.20 0.75 0 0 1 522.20 156.35 Z" fill="#f2c4c4" stroke="#ababab" stroke-width=".55"/><path d="M522.89 157.30 A15.51 0.70 0 0 0 553.91 157.30 L547.80 165.60 L547.80 172.70 A9.40 0.90 0 0 1 529.00 172.70 L529.00 165.60 Z" fill="#f6d65c" stroke="#ababab" stroke-width=".55"/><path d="M529.00 174.00 A9.40 0.90 0 0 0 547.80 174.00 L547.80 178.50 A9.40 0.90 0 0 1 529.00 178.50 Z" fill="#6fcfee" stroke="#ababab" stroke-width=".55"/><path d="M529.00 179.40 A9.40 0.90 0 0 0 547.80 179.40 L547.80 183.80 A9.40 0.90 0 0 1 529.00 183.80 Z" fill="#c6e68e" stroke="#ababab" stroke-width=".55"/><path d="M529.00 184.80 A9.40 0.90 0 0 0 547.80 184.80 L547.80 189.60 A9.40 0.90 0 0 1 529.00 189.60 Z" fill="#ea735e" stroke="#ababab" stroke-width=".55"/></svg>
<div class="a" style="left:622.8px;top:96.90px;width:5.8px;height:5.8px;background:#6ab1e9;border:.5px solid rgba(0,0,0,.25)"></div><div class="a nw" style="left:631.2px;top:95.90px;font-size:6.5px;color:#444">Akquise</div><div class="a" style="left:622.8px;top:107.57px;width:5.8px;height:5.8px;background:#77cf77;border:.5px solid rgba(0,0,0,.25)"></div><div class="a nw" style="left:631.2px;top:106.57px;font-size:6.5px;color:#444">Qualifizierung</div><div class="a" style="left:622.8px;top:118.24px;width:5.8px;height:5.8px;background:#f0a052;border:.5px solid rgba(0,0,0,.25)"></div><div class="a nw" style="left:631.2px;top:117.24px;font-size:6.5px;color:#444">Benötigt Analyse</div><div class="a" style="left:622.8px;top:128.91px;width:5.8px;height:5.8px;background:#b78cd4;border:.5px solid rgba(0,0,0,.25)"></div><div class="a nw" style="left:631.2px;top:127.91px;font-size:6.5px;color:#444">Richtpreisangebot</div><div class="a" style="left:622.8px;top:139.58px;width:5.8px;height:5.8px;background:#d8b26e;border:.5px solid rgba(0,0,0,.25)"></div><div class="a nw" style="left:631.2px;top:138.58px;font-size:6.5px;color:#444">Infos an Entscheider</div><div class="a" style="left:622.8px;top:150.25px;width:5.8px;height:5.8px;background:#f6c8c8;border:.5px solid rgba(0,0,0,.25)"></div><div class="a nw" style="left:631.2px;top:149.25px;font-size:6.5px;color:#444">Vorstellungsanalyse</div><div class="a" style="left:622.8px;top:160.92px;width:5.8px;height:5.8px;background:#f6d85e;border:.5px solid rgba(0,0,0,.25)"></div><div class="a nw" style="left:631.2px;top:159.92px;font-size:6.5px;color:#444">Angebot</div><div class="a" style="left:622.8px;top:171.59px;width:5.8px;height:5.8px;background:#72d6f0;border:.5px solid rgba(0,0,0,.25)"></div><div class="a nw" style="left:631.2px;top:170.59px;font-size:6.5px;color:#444">Verhandlung/Prüfung</div><div class="a" style="left:622.8px;top:182.26px;width:5.8px;height:5.8px;background:#c8e790;border:.5px solid rgba(0,0,0,.25)"></div><div class="a nw" style="left:631.2px;top:181.26px;font-size:6.5px;color:#444">Vertragsabschluss</div><div class="a" style="left:622.8px;top:192.93px;width:5.8px;height:5.8px;background:#e8715e;border:.5px solid rgba(0,0,0,.25)"></div><div class="a nw" style="left:631.2px;top:191.93px;font-size:6.5px;color:#444">Gewonnen</div>
<div class="a nw" style="left:531.1px;top:203.2px;font-size:7.7px;color:#444">Für Details Segment anwählen.</div>
<div class="a nw" style="left:503.5px;top:230.3px;font-size:4.68px;color:#555">Total aller Chancen (kumuliert) nach Verkaufsphase. [20.02.2023 - 20.02.2024]</div>

<!-- SERVICE PANEL -->
<svg class="a" style="left:455px;top:248.8px" width="4.8" height="4.8" viewBox="0 0 10 10"><circle cx="5" cy="5" r="5" fill="#fff"/><path d="M5 2.2 L5 5.2 L7.2 6.2" stroke="#2a5777" stroke-width="1.2" fill="none"/></svg>
<div class="a ptitle" style="left:462.6px;top:248.2px;font-size:5.68px;letter-spacing:.6px">SERVICEFÄLLE NACH STATUS &amp; NACH MITARBEITER</div>
<svg class="a" style="left:698.2px;top:248.4px" width="4.6" height="4.6" viewBox="0 0 10 10"><circle cx="5" cy="5" r="5" fill="#fff"/><path d="M2.8 4 L5 6.3 L7.2 4" stroke="#2a5777" stroke-width="1.3" fill="none"/></svg>
<svg class="a" style="left:707px;top:248.4px" width="5" height="5" viewBox="0 0 10 10"><rect x="0.8" y="2.8" width="6.4" height="6.4" fill="none" stroke="#fff" stroke-width="1.2"/><path d="M3 0.8 L9.2 0.8 L9.2 7" fill="none" stroke="#fff" stroke-width="1.2"/></svg>
<div class="a" style="left:453.6px;top:257.5px;width:262.2px;height:148px;background:#fdfdfe"></div>
<div class="a nw" style="left:492.4px;top:264.5px;font-size:8.85px;color:#333">Servicefälle nach Status von User - Summe: 20</div>
<svg class="a" style="left:0;top:0" width="720" height="405" viewBox="0 0 720 405"><line x1="522.30" y1="285.2" x2="522.30" y2="405" stroke="#cfcfcf" stroke-width=".6"/><line x1="537.33" y1="285.2" x2="537.33" y2="405" stroke="#e6e6e6" stroke-width=".6"/><line x1="552.36" y1="285.2" x2="552.36" y2="405" stroke="#e6e6e6" stroke-width=".6"/><line x1="567.39" y1="285.2" x2="567.39" y2="405" stroke="#e6e6e6" stroke-width=".6"/><line x1="582.42" y1="285.2" x2="582.42" y2="405" stroke="#e6e6e6" stroke-width=".6"/><line x1="597.45" y1="285.2" x2="597.45" y2="405" stroke="#e6e6e6" stroke-width=".6"/><line x1="612.48" y1="285.2" x2="612.48" y2="405" stroke="#e6e6e6" stroke-width=".6"/><line x1="627.51" y1="285.2" x2="627.51" y2="405" stroke="#e6e6e6" stroke-width=".6"/><path d="M522.30 293.30 L527.10 287.30 L542.13 287.30 L537.33 293.30 Z" fill="#d9f2b0" stroke="rgba(90,90,90,.35)" stroke-width=".4"/><rect x="522.30" y="293.30" width="15.03" height="11.15" fill="#c6e891" stroke="rgba(90,90,90,.35)" stroke-width=".4"/><path d="M537.33 293.30 L542.13 287.30 L557.16 287.30 L552.36 293.30 Z" fill="#f2a193" stroke="rgba(90,90,90,.35)" stroke-width=".4"/><rect x="537.33" y="293.30" width="15.03" height="11.15" fill="#ea7b6b" stroke="rgba(90,90,90,.35)" stroke-width=".4"/><path d="M552.36 293.30 L557.16 287.30 L557.16 298.45 L552.36 304.45 Z" fill="#c45e50" stroke="rgba(90,90,90,.35)" stroke-width=".4"/><path d="M522.30 316.05 L527.10 310.05 L557.16 310.05 L552.36 316.05 Z" fill="#d9f2b0" stroke="rgba(90,90,90,.35)" stroke-width=".4"/><rect x="522.30" y="316.05" width="30.06" height="11.15" fill="#c6e891" stroke="rgba(90,90,90,.35)" stroke-width=".4"/><path d="M552.36 316.05 L557.16 310.05 L557.16 321.20 L552.36 327.20 Z" fill="#a3c874" stroke="rgba(90,90,90,.35)" stroke-width=".4"/><path d="M522.30 338.80 L527.10 332.80 L542.13 332.80 L537.33 338.80 Z" fill="#9ae2f5" stroke="rgba(90,90,90,.35)" stroke-width=".4"/><rect x="522.30" y="338.80" width="15.03" height="11.15" fill="#70d3ef" stroke="rgba(90,90,90,.35)" stroke-width=".4"/><path d="M537.33 338.80 L542.13 332.80 L557.16 332.80 L552.36 338.80 Z" fill="#f2a193" stroke="rgba(90,90,90,.35)" stroke-width=".4"/><rect x="537.33" y="338.80" width="15.03" height="11.15" fill="#ea7b6b" stroke="rgba(90,90,90,.35)" stroke-width=".4"/><path d="M552.36 338.80 L557.16 332.80 L557.16 343.95 L552.36 349.95 Z" fill="#c45e50" stroke="rgba(90,90,90,.35)" stroke-width=".4"/><path d="M522.30 361.55 L527.10 355.55 L542.13 355.55 L537.33 361.55 Z" fill="#f9dada" stroke="rgba(90,90,90,.35)" stroke-width=".4"/><rect x="522.30" y="361.55" width="15.03" height="11.15" fill="#f6c7c7" stroke="rgba(90,90,90,.35)" stroke-width=".4"/><path d="M537.33 361.55 L542.13 355.55 L587.22 355.55 L582.42 361.55 Z" fill="#f9e296" stroke="rgba(90,90,90,.35)" stroke-width=".4"/><rect x="537.33" y="361.55" width="45.09" height="11.15" fill="#f6d66b" stroke="rgba(90,90,90,.35)" stroke-width=".4"/><path d="M582.42 361.55 L587.22 355.55 L602.25 355.55 L597.45 361.55 Z" fill="#9ae2f5" stroke="rgba(90,90,90,.35)" stroke-width=".4"/><rect x="582.42" y="361.55" width="15.03" height="11.15" fill="#70d3ef" stroke="rgba(90,90,90,.35)" stroke-width=".4"/><path d="M597.45 361.55 L602.25 355.55 L617.28 355.55 L612.48 361.55 Z" fill="#d9f2b0" stroke="rgba(90,90,90,.35)" stroke-width=".4"/><rect x="597.45" y="361.55" width="15.03" height="11.15" fill="#c6e891" stroke="rgba(90,90,90,.35)" stroke-width=".4"/><path d="M612.48 361.55 L617.28 355.55 L632.31 355.55 L627.51 361.55 Z" fill="#f2a193" stroke="rgba(90,90,90,.35)" stroke-width=".4"/><rect x="612.48" y="361.55" width="15.03" height="11.15" fill="#ea7b6b" stroke="rgba(90,90,90,.35)" stroke-width=".4"/><path d="M627.51 361.55 L632.31 355.55 L632.31 366.70 L627.51 372.70 Z" fill="#c45e50" stroke="rgba(90,90,90,.35)" stroke-width=".4"/><path d="M522.30 384.30 L527.10 378.30 L542.13 378.30 L537.33 384.30 Z" fill="#f9e296" stroke="rgba(90,90,90,.35)" stroke-width=".4"/><rect x="522.30" y="384.30" width="15.03" height="11.15" fill="#f6d66b" stroke="rgba(90,90,90,.35)" stroke-width=".4"/><path d="M537.33 384.30 L542.13 378.30 L572.19 378.30 L567.39 384.30 Z" fill="#9ae2f5" stroke="rgba(90,90,90,.35)" stroke-width=".4"/><rect x="537.33" y="384.30" width="30.06" height="11.15" fill="#70d3ef" stroke="rgba(90,90,90,.35)" stroke-width=".4"/><path d="M567.39 384.30 L572.19 378.30 L587.22 378.30 L582.42 384.30 Z" fill="#d9f2b0" stroke="rgba(90,90,90,.35)" stroke-width=".4"/><rect x="567.39" y="384.30" width="15.03" height="11.15" fill="#c6e891" stroke="rgba(90,90,90,.35)" stroke-width=".4"/><path d="M582.42 384.30 L587.22 378.30 L587.22 389.45 L582.42 395.45 Z" fill="#a3c874" stroke="rgba(90,90,90,.35)" stroke-width=".4"/><path d="M522.30 407.05 L527.10 401.05 L557.16 401.05 L552.36 407.05 Z" fill="#9ae2f5" stroke="rgba(90,90,90,.35)" stroke-width=".4"/><rect x="522.30" y="407.05" width="30.06" height="11.15" fill="#70d3ef" stroke="rgba(90,90,90,.35)" stroke-width=".4"/><path d="M552.36 407.05 L557.16 401.05 L572.19 401.05 L567.39 407.05 Z" fill="#f2a193" stroke="rgba(90,90,90,.35)" stroke-width=".4"/><rect x="552.36" y="407.05" width="15.03" height="11.15" fill="#ea7b6b" stroke="rgba(90,90,90,.35)" stroke-width=".4"/><path d="M567.39 407.05 L572.19 401.05 L572.19 412.20 L567.39 418.20 Z" fill="#c45e50" stroke="rgba(90,90,90,.35)" stroke-width=".4"/></svg>
<div class="a nw" style="left:400px;width:118.4px;text-align:right;top:293.10px;font-size:5.5px;color:#555">Aktiv - Zugewiesen</div><div class="a nw" style="left:400px;width:118.4px;text-align:right;top:315.85px;font-size:5.5px;color:#555">Aktiv - Neu</div><div class="a nw" style="left:400px;width:118.4px;text-align:right;top:338.60px;font-size:5.5px;color:#555">Erledigt - Zufrieden</div><div class="a nw" style="left:400px;width:118.4px;text-align:right;top:361.35px;font-size:5.5px;color:#555">Erledigt - Abgelaufen</div><div class="a nw" style="left:400px;width:118.4px;text-align:right;top:384.10px;font-size:5.5px;color:#555">Erledigt - Keine Lösung</div><div class="a nw" style="left:400px;width:118.4px;text-align:right;top:406.85px;font-size:5.5px;color:#555">Erledigt - Weitergeleitet</div>
<div class="a" style="left:669px;top:288.10px;width:6px;height:5.6px;background:#ea7b6b;border:.5px solid rgba(0,0,0,.3)"></div><div class="a nw" style="left:677.5px;top:287.00px;font-size:6.7px;color:#444">schmitt</div><div class="a" style="left:669px;top:298.85px;width:6px;height:5.6px;background:#c6e891;border:.5px solid rgba(0,0,0,.3)"></div><div class="a nw" style="left:677.5px;top:297.75px;font-size:6.7px;color:#444">vogt</div><div class="a" style="left:669px;top:309.60px;width:6px;height:5.6px;background:#70d3ef;border:.5px solid rgba(0,0,0,.3)"></div><div class="a nw" style="left:677.5px;top:308.50px;font-size:6.7px;color:#444">bauer</div><div class="a" style="left:669px;top:320.35px;width:6px;height:5.6px;background:#f6d66b;border:.5px solid rgba(0,0,0,.3)"></div><div class="a nw" style="left:677.5px;top:319.25px;font-size:6.7px;color:#444">dachsler</div><div class="a" style="left:669px;top:331.10px;width:6px;height:5.6px;background:#f6c7c7;border:.5px solid rgba(0,0,0,.3)"></div><div class="a nw" style="left:677.5px;top:330.00px;font-size:6.7px;color:#444">maier</div>

</body></html>
